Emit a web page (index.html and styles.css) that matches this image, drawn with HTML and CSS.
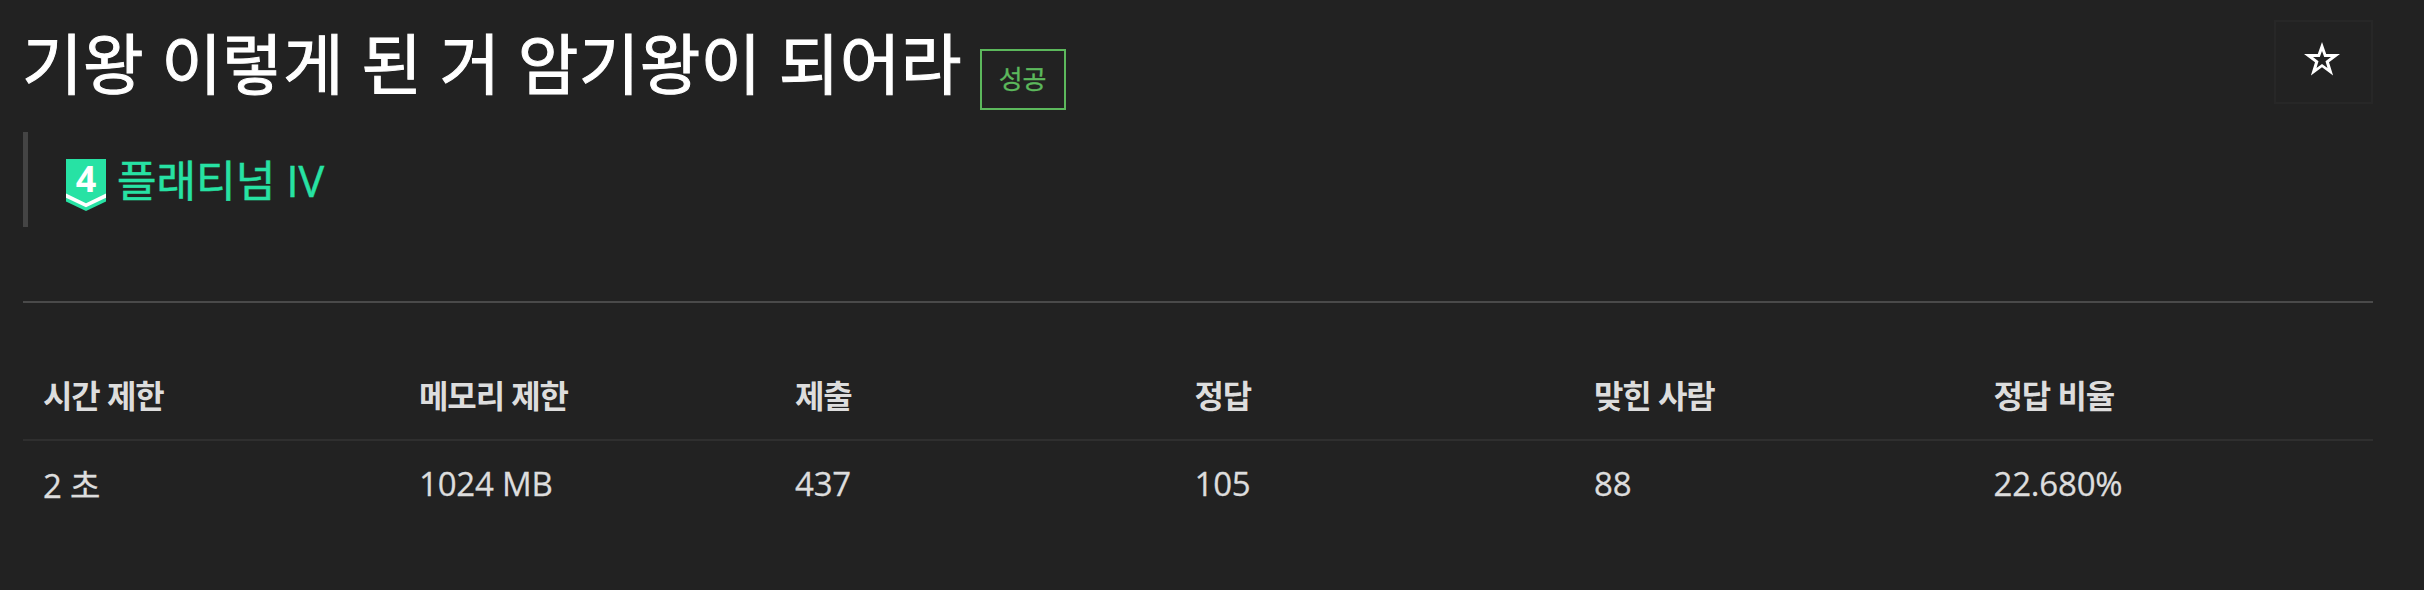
FILE: index.html
```html
<!DOCTYPE html>
<html lang="ko">
<head>
<meta charset="utf-8">
<title>기왕 이렇게 된 거 암기왕이 되어라</title>
<link rel="stylesheet" href="styles.css">
</head>
<body>
<main class="page">
  <header class="head">
    <div class="title-row">
      <h1 class="title">기왕 이렇게 된 거 암기왕이 되어라</h1>
      <span class="label">성공</span>
    </div>
    <button class="fav" aria-label="즐겨찾기">
      <svg class="star" viewBox="0 0 36 34"><path fill="#fff" fill-rule="evenodd" d="M18 0L22.2 12H36L25 20.2L29.1 33.4L18 25.3L6.9 33.4L11 20.2L0 12H13.8ZM18 9L15.8 15H9L14.5 19.2L12.5 26L18 22L23.5 26L21.5 19.2L27 15H20.2Z"/></svg>
    </button>
  </header>
  <blockquote class="tier">
    <svg class="badge" viewBox="0 0 40 52">
      <path fill="#27e2a4" d="M0 0H40V42.5L20 52L0 42.5Z"/>
      <path fill="#fff" d="M0 34.5L20 44.2L40 34.5V38.7L20 48.2L0 38.7Z"/>
      <text class="badge-num" x="20" y="33" text-anchor="middle">4</text>
    </svg>
    <span class="tier-name">플래티넘 IV</span>
  </blockquote>
  <hr class="rule">
  <table class="info">
    <thead>
      <tr><th class="w16">시간 제한</th><th class="w16">메모리 제한</th><th class="w17">제출</th><th class="w17">정답</th><th class="w17">맞힌 사람</th><th class="w17">정답 비율</th></tr>
    </thead>
    <tbody>
      <tr><td>2 초</td><td>1024 MB</td><td>437</td><td>105</td><td>88</td><td>22.680%</td></tr>
    </tbody>
  </table>
</main>
</body>
</html>
```
FILE: styles.css
```css
* { box-sizing: border-box; }
body {
  margin: 0;
  background: #222;
  color: #ddd;
  font-family: "Open Sans", "Noto Sans CJK KR", sans-serif;
  font-size: 33px;
}
.page {
  height: 590px;
  padding: 20px 51px 0 23px;
  overflow: hidden;
}
.head { display: flex; justify-content: space-between; height: 112px; }
.title-row { display: flex; align-items: flex-start; }
.title {
  margin: -1px 0 0 -1px;
  font-size: 66px;
  font-weight: 400;
  line-height: 88px;
  letter-spacing: 0.2px;
  -webkit-text-stroke: 1px #fff;
  color: #fff;
  white-space: nowrap;
}
.label {
  margin: 29px 0 0 18px;
  width: 86px;
  height: 61px;
  border: 2px solid #5cb85c;
  color: #5cb85c;
  font-size: 26px;
  -webkit-text-stroke: 0.3px #5cb85c;
  line-height: 57px;
  text-align: center;
}
.fav {
  width: 99px;
  height: 84px;
  border: 2px solid #272727;
  background: #222;
  display: flex;
  justify-content: center;
  padding: 20px 3px 0 0;
}
.star { width: 36px; height: 34px; }
.tier {
  display: flex;
  margin: 0;
  height: 95px;
  border-left: 5px solid #444;
  padding: 27px 0 0 38px;
  font-size: 43px;
  line-height: 43px;
  color: #27e2a4;
  -webkit-text-stroke: 0.5px #27e2a4;
}
.badge { width: 40px; height: 52px; margin-right: 11px; overflow: visible; }
.badge-num { font: 700 36px "Open Sans", sans-serif; fill: #fff; -webkit-text-stroke: 0.6px #fff; }
.rule { margin: 74px 0 51px; border: 0; height: 2px; background: #4a4a4a; }
.info { width: 100%; table-layout: fixed; border-collapse: separate; border-spacing: 0; }
.info th, .info td { text-align: left; padding: 0 20px; white-space: nowrap; }
.info th {
  height: 87px;
  padding-bottom: 6px;
  border-bottom: 2px solid #2f2f2f;
  font-size: 32px;
  font-weight: 700;
  letter-spacing: -1.1px;
}
.info td { height: 86px; padding-bottom: 1px; letter-spacing: -0.2px; -webkit-text-stroke: 0.3px #ddd; }
.w16 { width: 16%; }
.w17 { width: 17%; }
```
